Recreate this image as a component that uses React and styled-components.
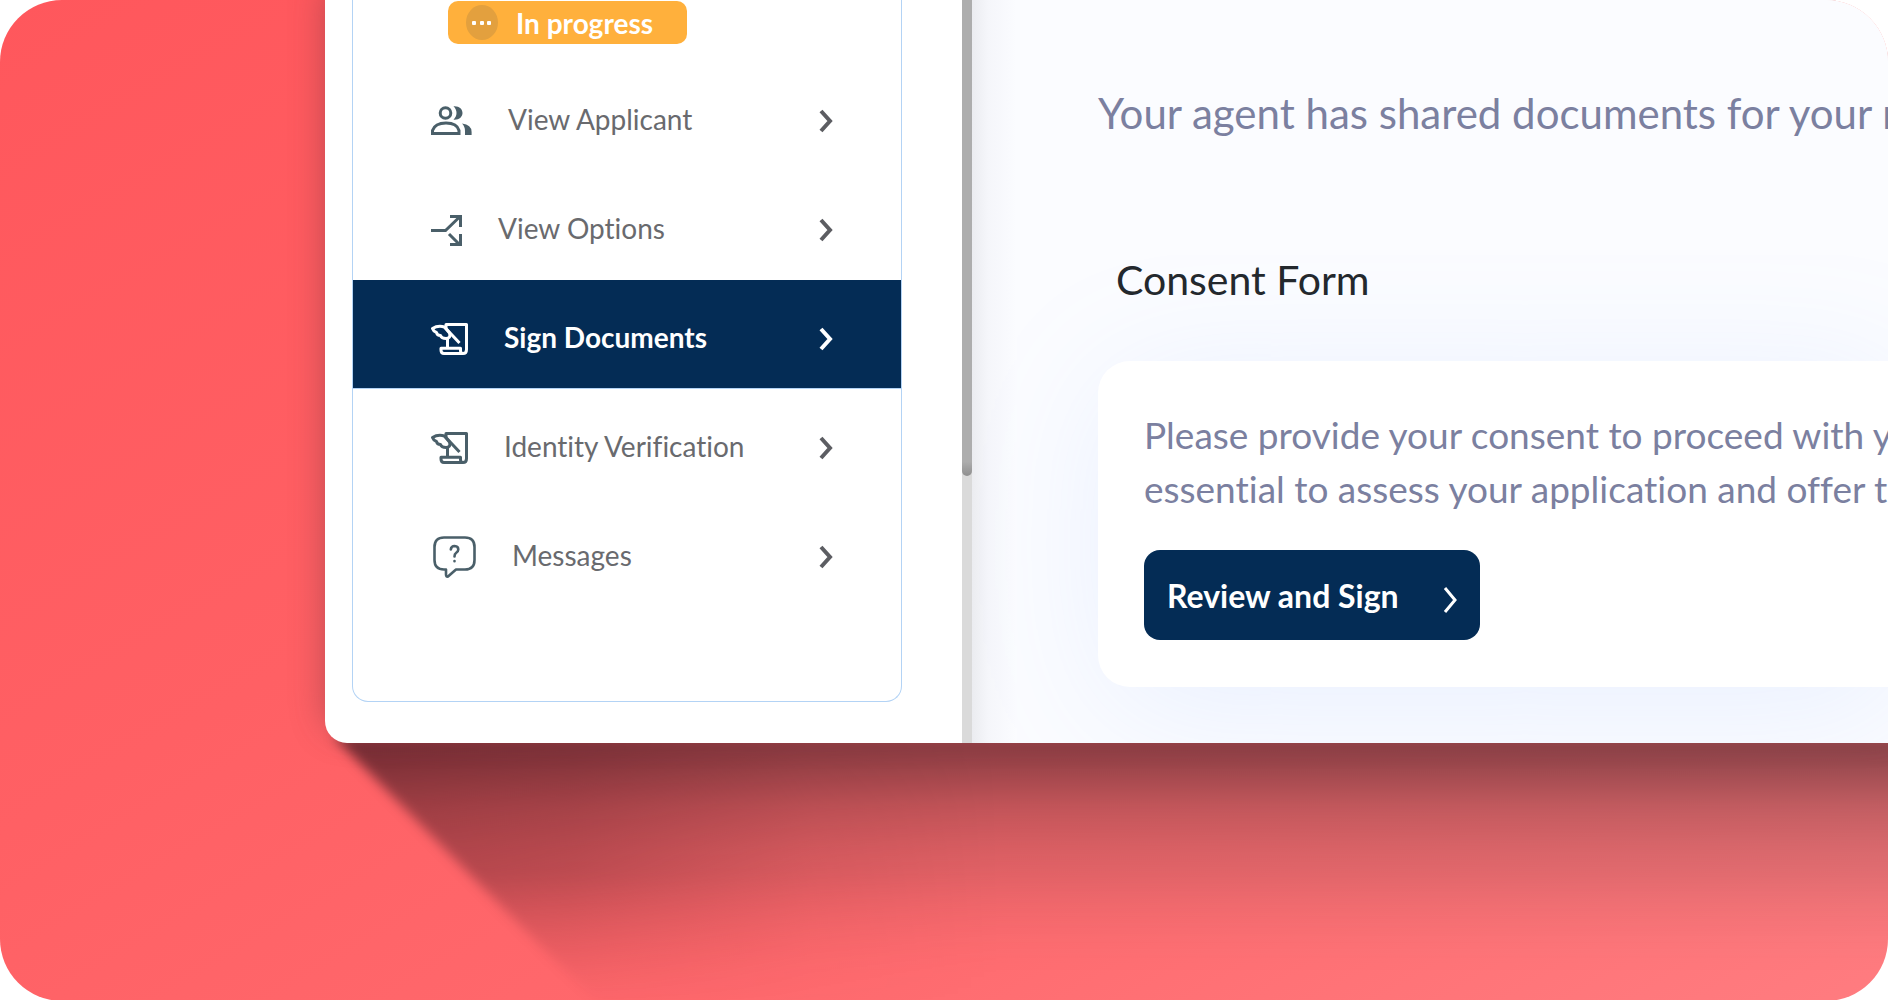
import React from "react";
import styled, { createGlobalStyle } from "styled-components";

const GlobalStyle = createGlobalStyle`
  * {
    box-sizing: border-box;
  }
  body {
    margin: 0;
    background: #fff;
    font-family: Lato, "Liberation Sans", sans-serif;
    font-variant-ligatures: none;
  }
`;

const Page = styled.div`
  position: relative;
  isolation: isolate;
  min-height: 100vh;
  padding: 0 0 258px 325px;
  border-radius: 62px;
  overflow: hidden;
  background: linear-gradient(150deg, #ff575c 0%, #ff6064 40%, #ff686c 65%, #ff7c80 100%);
`;

const CastShadow = styled.div`
  position: absolute;
  z-index: -1;
  left: 333px;
  right: -40px;
  bottom: -10px;
  height: 275px;
  filter: blur(6px);

  &::before {
    content: "";
    display: block;
    height: 100%;
    background:
      linear-gradient(90deg, rgba(70, 15, 25, 0.32), rgba(70, 15, 25, 0.23) 15%, rgba(70, 15, 25, 0.06) 30%, rgba(70, 15, 25, 0) 42%),
      linear-gradient(
        180deg,
        rgba(45, 28, 35, 0.56) 0%,
        rgba(45, 28, 35, 0.5) 8%,
        rgba(60, 40, 45, 0.31) 26%,
        rgba(70, 50, 55, 0.2) 42%,
        rgba(80, 55, 60, 0.1) 64%,
        rgba(90, 60, 65, 0) 86%
      );
    mask-image: linear-gradient(180deg, #000 50%, transparent 100%);
    clip-path: polygon(0 0, 100% 0, 100% 100%, 272px 100%);
  }
`;

const Window = styled.div`
  display: grid;
  grid-template-columns: 637px 10px minmax(0, 1fr);
  background: #fff;
  border-bottom-left-radius: 22px;
  overflow: hidden;
  box-shadow: 0 -12px 34px rgba(110, 50, 60, 0.45);
`;

const Sidebar = styled.aside`
  padding: 0 60px 41px 27px;
`;

const Menu = styled.nav`
  padding: 1px 0 94px;
  border: 1px solid #b3d3f5;
  border-top: 0;
  border-radius: 0 0 16px 16px;
`;

const Badge = styled.div`
  display: inline-flex;
  align-items: center;
  gap: 18px;
  height: 43px;
  margin: 0 0 18px 95px;
  padding: 0 34px 0 18px;
  border-radius: 10px;
  background: #ffb03c;
  color: #fff;
  font-size: 28px;
  font-weight: 700;
  line-height: 32px;
  vertical-align: top;
`;

const BadgeIcon = styled.svg`
  width: 32px;
  height: 35px;
`;

const MenuItem = styled.a`
  display: flex;
  align-items: center;
  height: 109px;
  padding: 10px 68px 0 78px;
  border-bottom: 1px solid ${({ $active }) => ($active ? "#b3d3f5" : "transparent")};
  background: ${({ $active }) => ($active ? "#042c55" : "transparent")};
  background-clip: padding-box;
  color: ${({ $active }) => ($active ? "#fff" : "#4a5f69")};
  text-decoration: none;
`;

const MenuLabel = styled.span`
  flex: 1;
  margin: 0 0 4px 36px;
  color: ${({ $active }) => ($active ? "#fff" : "#696a6e")};
  font-size: 28px;
  font-weight: ${({ $active }) => ($active ? 700 : 400)};
  line-height: 32px;
`;

const Icon = styled.svg`
  flex: none;
  fill: none;
  stroke: currentColor;
  stroke-width: 3;
`;

const MenuChevron = styled(Icon)`
  color: ${({ $active }) => ($active ? "#fff" : "#5c5d62")};
  stroke-width: 4;
`;

const Track = styled.div`
  background: #dadada;
`;

const Thumb = styled.div`
  height: 64%;
  border-radius: 0 0 5px 5px;
  background: linear-gradient(180deg, #adadad 97%, #8f8f8f);
`;

const Main = styled.main`
  padding: 90px 0 54px 126px;
  overflow: hidden;
  white-space: nowrap;
  background: linear-gradient(90deg, #ebecf0 0, #f5f6fa 16px, #fbfcff 44px);
`;

const Intro = styled.p`
  margin: 0 0 121px;
  color: #7b80a0;
  font-size: 42px;
  line-height: 46px;
`;

const Title = styled.h2`
  margin: 0 0 58px 18px;
  color: #23282d;
  font-size: 41px;
  font-weight: 400;
  line-height: 46px;
`;

const Card = styled.section`
  padding: 47px 0 47px 46px;
  border-radius: 32px 0 0 32px;
  background: #fff;
  box-shadow: 10px 20px 140px rgba(130, 170, 255, 0.15);
`;

const CardText = styled.p`
  margin: 0 0 34px;
  color: #7b80a0;
  font-size: 37px;
  line-height: 54px;
`;

const SignButton = styled.button`
  display: flex;
  align-items: center;
  gap: 44px;
  height: 90px;
  padding: 0 22px 0 23px;
  border: 0;
  border-radius: 16px;
  background: #042c55;
  color: #fff;
  font-family: inherit;
  font-size: 32px;
  font-weight: 700;
`;

const ButtonChevron = styled(Icon)`
  margin-top: 10px;
`;

const PeopleIcon = () => (
  <Icon width="41" height="30" viewBox="0 0 41 30">
    <circle cx="14.5" cy="7" r="5.3" />
    <path d="M1.5 27.5V24.5Q4 17 15 17Q26 17 28 24.5V27.5Z" />
    <g fill="currentColor" stroke="none">
      <path d="M22.5 0.3C34.5 -0.5 34.5 14.5 22.5 13.7C26.5 9.5 26.5 4.5 22.5 0.3Z" />
      <path d="M31 17.5Q40.6 18.5 40.6 26V29H34V25Q34 20.5 31 17.5Z" />
    </g>
  </Icon>
);

const SplitIcon = () => (
  <Icon width="31" height="31" viewBox="0 0 31 31">
    <path d="M0 15.5H14.5L28 2.5M19 1.5H29.5V12M18 19L28 29M29.5 19V29.5H19" />
  </Icon>
);

const QuillIcon = () => (
  <Icon width="37" height="32" viewBox="0 0 37 32">
    <g strokeLinejoin="round">
      <path d="M15 5V1.5H35.5V26.5Q35.5 30.5 32 30.5H13Q10 30.5 10 27V25.3H29.5V27.5Q29.5 30.5 32 30.5" />
      <path d="M1.5 5.5Q7 2 13.5 4L18.5 10Q20 15.5 15 15.5Q10.5 15.5 9.5 12.5Q6 12.5 5.5 9.5Q2.5 8.5 1.5 5.5Z" />
      <path d="M13.5 4L28.5 20M16.5 15.5V25" />
    </g>
  </Icon>
);

const MessageIcon = () => (
  <Icon width="45" height="42" viewBox="-2 0 45 42">
    <g strokeWidth="2.6" strokeLinejoin="round" strokeLinecap="round">
      <path d="M11 1.5H32Q41.5 1.5 41.5 11V24Q41.5 33.5 32 33.5H23L15 40.5Q13 41 13 38.5V33.5H11Q1.5 33.5 1.5 24V11Q1.5 1.5 11 1.5Z" />
      <path d="M17.8 13.5Q18.2 10 21.6 10Q25.3 10.2 25.3 13.5Q25.3 15.5 23 17Q21.5 18 21.5 20.5M21.5 25V25.3" />
    </g>
  </Icon>
);

const items = [
  { label: "View Applicant", Glyph: PeopleIcon },
  { label: "View Options", Glyph: SplitIcon },
  { label: "Sign Documents", Glyph: QuillIcon, active: true },
  { label: "Identity Verification", Glyph: QuillIcon },
  { label: "Messages", Glyph: MessageIcon },
];

const App = () => {
  return (
    <Page>
      <GlobalStyle />
      <CastShadow />
      <Window>
        <Sidebar>
          <Menu>
            <Badge>
              <BadgeIcon viewBox="0 0 32 35">
                <ellipse cx="16" cy="17.5" rx="16" ry="17.5" fill="#e3a03e" />
                <g fill="#fff">
                  <rect x="6" y="16" width="4" height="4" rx="1" />
                  <rect x="14" y="16" width="4" height="4" rx="1" />
                  <rect x="21" y="16" width="4" height="4" rx="1" />
                </g>
              </BadgeIcon>
              In progress
            </Badge>
            {items.map(({ label, Glyph, active }) => (
              <MenuItem key={label} href="#" $active={active}>
                <Glyph />
                <MenuLabel $active={active}>{label}</MenuLabel>
                <MenuChevron $active={active} width="14" height="24" viewBox="0 0 14 24">
                  <path d="M2 2L11 12L2 22" />
                </MenuChevron>
              </MenuItem>
            ))}
          </Menu>
        </Sidebar>
        <Track>
          <Thumb />
        </Track>
        <Main>
          <Intro>Your agent has shared documents for your review</Intro>
          <Title>Consent Form</Title>
          <Card>
            <CardText>
              Please provide your consent to proceed with your
              <br />
              essential to assess your application and offer the
            </CardText>
            <SignButton>
              Review and Sign
              <ButtonChevron width="15" height="28" viewBox="0 0 15 28">
                <path d="M2 2L12 14L2 26" />
              </ButtonChevron>
            </SignButton>
          </Card>
        </Main>
      </Window>
    </Page>
  );
};

export default App;
